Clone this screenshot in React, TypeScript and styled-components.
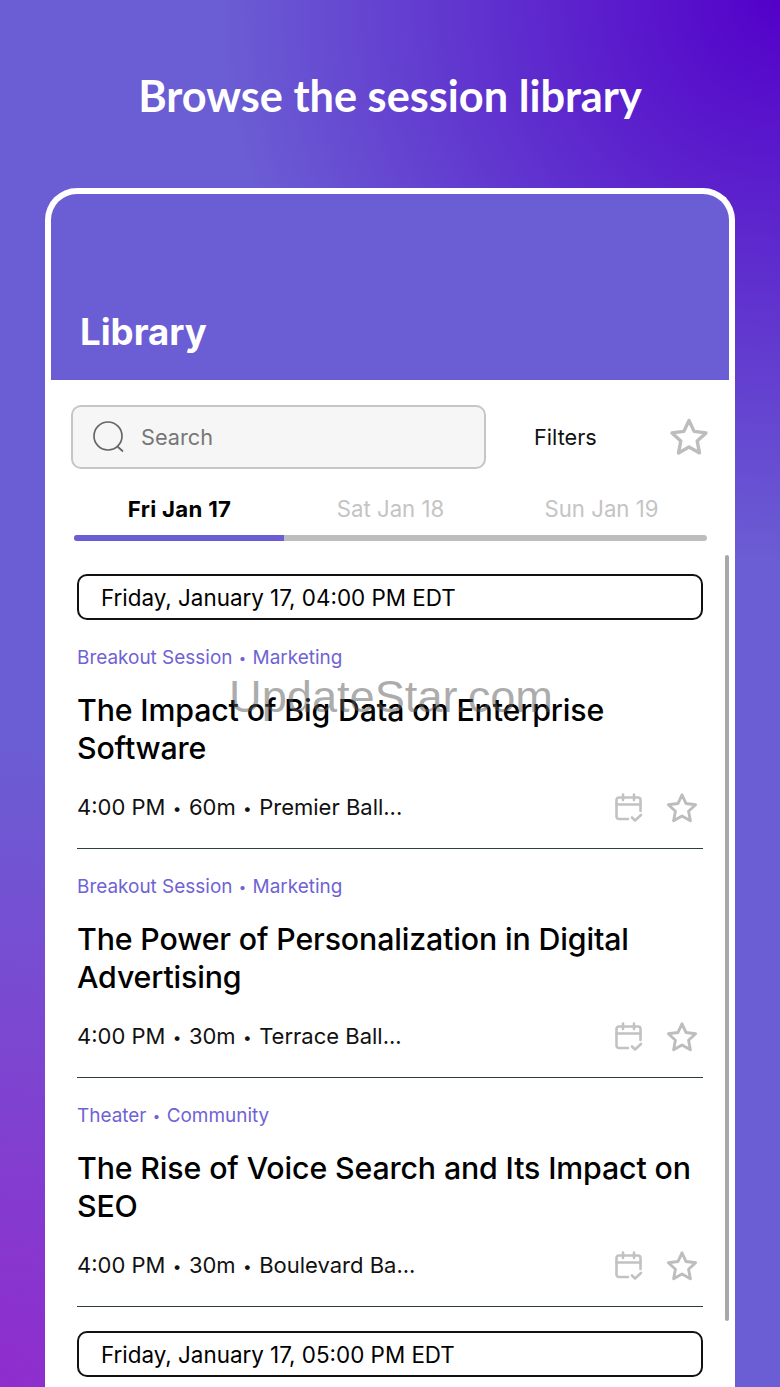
import React from 'react';
import styled, { createGlobalStyle } from 'styled-components';

const Global = createGlobalStyle`
  html, body { margin: 0; padding: 0; }
  body { font-family: Inter, "Liberation Sans", sans-serif; }
`;

const Page = styled.div`
  position: relative;
  width: 780px;
  height: 1387px;
  overflow: hidden;
  box-sizing: border-box;
  padding: 0 45px;
  background:
    radial-gradient(circle 560px at 100% 0, #5300c9 0%, rgba(83, 0, 201, 0) 100%),
    radial-gradient(circle 640px at 0 100%, #8f2ccd 0%, rgba(143, 44, 205, 0) 100%),
    #6b5dd3;
`;

const Headline = styled.h1`
  margin: 0;
  height: 188px;
  box-sizing: border-box;
  padding-top: 68px;
  text-align: center;
  font-family: Lato, sans-serif;
  font-weight: 700;
  font-size: 43.3px;
  line-height: 54px;
  color: #fff;
  white-space: nowrap;
`;

const Phone = styled.div`
  position: relative;
  height: 1199px;
  box-sizing: border-box;
  background: #fff;
  border: 6px solid #fff;
  border-bottom: 0;
  border-radius: 32px 32px 0 0;
  overflow: hidden;
`;

const Header = styled.header`
  height: 186px;
  box-sizing: border-box;
  background: #6b5dd3;
  padding: 115px 0 0 29px;
  font-weight: 700;
  font-size: 36.6px;
  line-height: 46px;
  color: #fff;
`;

const Toolbar = styled.div`
  display: flex;
  align-items: center;
  padding: 25px 20px 0;
  height: 64px;
`;

const SearchBox = styled.div`
  width: 415px;
  height: 64px;
  box-sizing: border-box;
  display: flex;
  align-items: center;
  gap: 16px;
  padding-left: 20px;
  background: #f6f6f6;
  border: 2px solid #c6c6c6;
  border-radius: 10px;
  font-size: 21.7px;
  color: #777;
`;

const FilterLabel = styled.span`
  margin-left: 48px;
  font-size: 21.7px;
  color: #111;
`;

const TopStar = styled.span`
  display: flex;
  margin-left: 72px;
`;

const Tabs = styled.div`
  display: grid;
  grid-template-columns: repeat(3, 1fr);
  margin: 25px 0 0 23px;
  width: 633px;
`;

const Tab = styled.div<{ $active?: boolean }>`
  text-align: center;
  font-size: 22.2px;
  line-height: 30px;
  font-weight: ${p => (p.$active ? 700 : 400)};
  letter-spacing: ${p => (p.$active ? '0.3px' : '0')};
  color: ${p => (p.$active ? '#000' : '#c4c4c4')};
`;

const Track = styled.div`
  margin: 11px 0 0 23px;
  width: 633px;
  height: 6px;
  border-radius: 3px;
  background: #bdbdbd;
  overflow: hidden;
`;

const TrackFill = styled.div`
  width: 210px;
  height: 100%;
  background: #6b5dd3;
`;

const List = styled.div`
  padding: 33px 26px 0;
`;

const TimeBar = styled.div`
  height: 46px;
  box-sizing: border-box;
  display: flex;
  align-items: center;
  padding-left: 22px;
  border: 2px solid #111;
  border-radius: 10px;
  font-size: 22.4px;
  color: #000;
`;

const Session = styled.article`
  height: 229px;
  box-sizing: border-box;
  border-bottom: 1.5px solid #2f3f3f;
  padding-top: 25px;
`;

const Dot = styled.span`
  font-size: 0.7em;
  margin: 0 0.2em;
  vertical-align: 0.08em;
`;

const Tag = styled.div`
  font-size: 18.95px;
  line-height: 26px;
  color: #6f62d4;

  ${Dot} {
    margin: 0 0.2em;
  }
`;

const Title = styled.h2`
  margin: 20px 0 0;
  font-weight: 450;
  font-size: 30.3px;
  line-height: 38px;
  color: #000;
  letter-spacing: -0.13px;
`;

const Meta = styled.div`
  display: flex;
  align-items: center;
  margin-top: 21px;
  height: 38px;
  font-size: 22px;
  color: #111;
`;

const MetaText = styled.span`
  flex: 1;
`;

const MetaIcons = styled.div`
  display: flex;
  align-items: center;
  gap: 23px;
  padding: 2px 5px 0 0;
`;

const NextTime = styled(TimeBar)`
  margin-top: 24px;
`;

const Scrollbar = styled.div`
  position: absolute;
  top: 361px;
  right: 0;
  width: 4px;
  height: 766px;
  border-radius: 2px;
  background: #a8a8a8;
`;

const Watermark = styled.div`
  position: absolute;
  left: 229px;
  top: 667px;
  font-family: "Liberation Sans", sans-serif;
  font-size: 45.2px;
  line-height: 60px;
  color: rgba(90, 90, 90, 0.5);
  white-space: nowrap;
`;

const Star = ({ size }: { size: number }) => (
  <svg width={size} height={size} viewBox="0 0 40 40" fill="none" stroke="#bdbdbd" strokeWidth={size > 34 ? 3.4 : 3.6} strokeLinejoin="round">
    <path d="M20 3.5l5.1 10.9 11.9 1.5-8.8 8.2 2.3 11.8L20 30l-10.5 5.9 2.3-11.8L3 15.9l11.9-1.5z" />
  </svg>
);

const CalendarCheck = () => (
  <svg width="28" height="30" viewBox="0 0 28 30" fill="none" stroke="#c2c2c2" strokeWidth="2.6" strokeLinecap="round" strokeLinejoin="round">
    <path d="M13 26H4a2.5 2.5 0 0 1-2.5-2.5V7A2.5 2.5 0 0 1 4 4.5h19A2.5 2.5 0 0 1 25.5 7v11" />
    <path d="M1.5 11.5h24" />
    <path d="M8 1.5v5.5M19 1.5v5.5" />
    <path d="M17 24.5l3 3 6-5.5" />
  </svg>
);

const SearchIcon = () => (
  <svg width="32" height="32" viewBox="0 0 32 32" fill="none" stroke="#666" strokeWidth="1.7" strokeLinecap="round">
    <circle cx="15" cy="15" r="14" />
    <path d="M25 26l4.5 4" />
  </svg>
);

const sessions = [
  { tag: ['Breakout Session', 'Marketing'], title: 'The Impact of Big Data on Enterprise Software', meta: ['4:00 PM', '60m', 'Premier Ball...'] },
  { tag: ['Breakout Session', 'Marketing'], title: 'The Power of Personalization in Digital Advertising', meta: ['4:00 PM', '30m', 'Terrace Ball...'] },
  { tag: ['Theater', 'Community'], title: 'The Rise of Voice Search and Its Impact on SEO', meta: ['4:00 PM', '30m', 'Boulevard Ba...'] },
];

const Dotted = ({ parts }: { parts: string[] }) => (
  <>
    {parts.map((part, i) => (
      <React.Fragment key={part}>
        {i > 0 && <Dot> • </Dot>}
        {part}
      </React.Fragment>
    ))}
  </>
);

export default function App() {
  return (
    <Page>
      <Global />
      <Headline>Browse the session library</Headline>
      <Phone>
        <Header>Library</Header>
        <Toolbar>
          <SearchBox>
            <SearchIcon />
            Search
          </SearchBox>
          <FilterLabel>Filters</FilterLabel>
          <TopStar><Star size={40} /></TopStar>
        </Toolbar>
        <Tabs>
          <Tab $active>Fri Jan 17</Tab>
          <Tab>Sat Jan 18</Tab>
          <Tab>Sun Jan 19</Tab>
        </Tabs>
        <Track><TrackFill /></Track>
        <List>
          <TimeBar>Friday, January 17, 04:00 PM EDT</TimeBar>
          {sessions.map(s => (
            <Session key={s.title}>
              <Tag><Dotted parts={s.tag} /></Tag>
              <Title>{s.title}</Title>
              <Meta>
                <MetaText><Dotted parts={s.meta} /></MetaText>
                <MetaIcons>
                  <CalendarCheck />
                  <Star size={32} />
                </MetaIcons>
              </Meta>
            </Session>
          ))}
          <NextTime>Friday, January 17, 05:00 PM EDT</NextTime>
        </List>
        <Scrollbar />
      </Phone>
      <Watermark>UpdateStar.com</Watermark>
    </Page>
  );
}
